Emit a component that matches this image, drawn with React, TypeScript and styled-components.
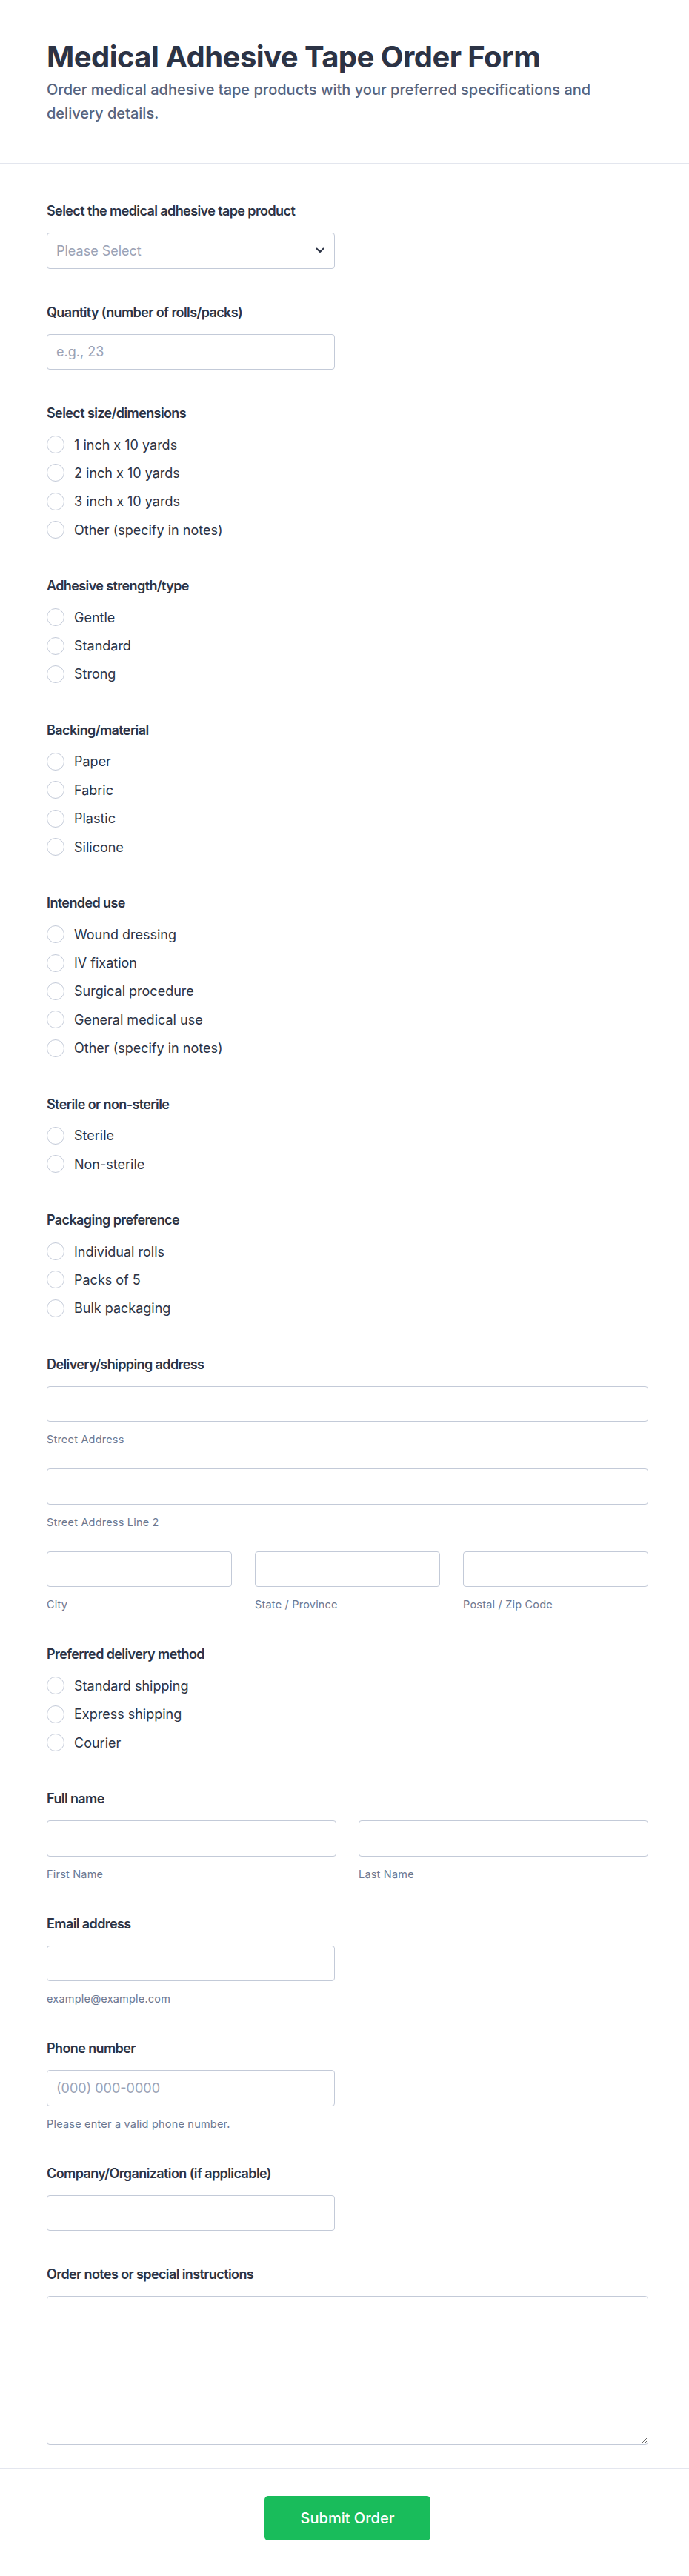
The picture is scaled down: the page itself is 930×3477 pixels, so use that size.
import React from "react";
import styled, { createGlobalStyle } from "styled-components";

const GlobalStyle = createGlobalStyle`
  * {
    box-sizing: border-box;
  }

  body {
    margin: 0;
    background: #ffffff;
    font-family: Inter, "Noto Sans", sans-serif;
    color: #2c3345;
  }
`;

type Option = string;

const sizes: Option[] = [
  "1 inch x 10 yards",
  "2 inch x 10 yards",
  "3 inch x 10 yards",
  "Other (specify in notes)",
];
const strengths: Option[] = ["Gentle", "Standard", "Strong"];
const backings: Option[] = ["Paper", "Fabric", "Plastic", "Silicone"];
const uses: Option[] = [
  "Wound dressing",
  "IV fixation",
  "Surgical procedure",
  "General medical use",
  "Other (specify in notes)",
];
const sterility: Option[] = ["Sterile", "Non-sterile"];
const packaging: Option[] = ["Individual rolls", "Packs of 5", "Bulk packaging"];
const delivery: Option[] = ["Standard shipping", "Express shipping", "Courier"];

function RadioGroup({ name, label, options }: { name: string; label: string; options: Option[] }) {
  return (
    <Field>
      <Label $tight>{label}</Label>
      <RadioList>
        {options.map((opt) => (
          <RadioRow key={opt}>
            <Radio name={name} value={opt} />
            <span>{opt}</span>
          </RadioRow>
        ))}
      </RadioList>
    </Field>
  );
}

function App() {
  return (
    <Page>
      <GlobalStyle />
      <Header>
        <Title>Medical Adhesive Tape Order Form</Title>
        <Subtitle>
          Order medical adhesive tape products with your preferred specifications and delivery
          details.
        </Subtitle>
      </Header>

      <Form onSubmit={(e) => e.preventDefault()}>
        <Field>
          <Label>Select the medical adhesive tape product</Label>
          <SelectWrap>
            <Select defaultValue="">
              <option value="" disabled>
                Please Select
              </option>
              <option>Paper tape</option>
              <option>Silk tape</option>
              <option>Transparent tape</option>
              <option>Foam tape</option>
            </Select>
            <Chevron width="12" height="8" viewBox="0 0 12 8" aria-hidden>
              <path d="M1.5 1.5L6 6l4.5-4.5" />
            </Chevron>
          </SelectWrap>
        </Field>

        <Field>
          <Label>Quantity (number of rolls/packs)</Label>
          <TextInput $half type="number" placeholder="e.g., 23" />
        </Field>

        <RadioGroup name="size" label="Select size/dimensions" options={sizes} />
        <RadioGroup name="strength" label="Adhesive strength/type" options={strengths} />
        <RadioGroup name="backing" label="Backing/material" options={backings} />
        <RadioGroup name="use" label="Intended use" options={uses} />
        <RadioGroup name="sterile" label="Sterile or non-sterile" options={sterility} />
        <RadioGroup name="packaging" label="Packaging preference" options={packaging} />

        <Field>
          <Label>Delivery/shipping address</Label>
          <AddressStack>
            <InputBlock>
              <TextInput />
              <SubLabel>Street Address</SubLabel>
            </InputBlock>
            <InputBlock>
              <TextInput />
              <SubLabel>Street Address Line 2</SubLabel>
            </InputBlock>
            <Columns $count={3}>
              <InputBlock>
                <TextInput />
                <SubLabel>City</SubLabel>
              </InputBlock>
              <InputBlock>
                <TextInput />
                <SubLabel>State / Province</SubLabel>
              </InputBlock>
              <InputBlock>
                <TextInput />
                <SubLabel>Postal / Zip Code</SubLabel>
              </InputBlock>
            </Columns>
          </AddressStack>
        </Field>

        <RadioGroup name="delivery" label="Preferred delivery method" options={delivery} />

        <Field>
          <Label>Full name</Label>
          <Columns $count={2}>
            <InputBlock>
              <TextInput />
              <SubLabel>First Name</SubLabel>
            </InputBlock>
            <InputBlock>
              <TextInput />
              <SubLabel>Last Name</SubLabel>
            </InputBlock>
          </Columns>
        </Field>

        <Field>
          <Label>Email address</Label>
          <TextInput $half type="email" />
          <SubLabel>example@example.com</SubLabel>
        </Field>

        <Field>
          <Label>Phone number</Label>
          <TextInput $half type="tel" placeholder="(000) 000-0000" />
          <SubLabel>Please enter a valid phone number.</SubLabel>
        </Field>

        <Field>
          <Label>Company/Organization (if applicable)</Label>
          <TextInput $half />
        </Field>

        <Field>
          <Label>Order notes or special instructions</Label>
          <TextArea />
        </Field>
      </Form>

      <Footer>
        <SubmitButton type="submit">Submit Order</SubmitButton>
      </Footer>
    </Page>
  );
}

const Page = styled.div`
  width: 100%;
  background: #ffffff;
`;

const Header = styled.header`
  padding: 53px 55px 51px 63px;
  border-bottom: 1px solid #e3e6ee;
`;

const Title = styled.h1`
  margin: 0;
  font-size: 40px;
  line-height: 48px;
  font-weight: 700;
  letter-spacing: -0.55px;
  color: #2c3345;
`;

const Subtitle = styled.p`
  margin: 4px 0 0;
  max-width: 760px;
  font-size: 20px;
  line-height: 32px;
  font-weight: 500;
  color: #57647e;
`;

const Form = styled.form`
  display: flex;
  flex-direction: column;
  gap: 45px;
  padding: 50px 55px 31px 63px;
`;

const Field = styled.div`
  display: flex;
  flex-direction: column;
  align-items: flex-start;
`;

const Label = styled.label<{ $tight?: boolean }>`
  font-size: 18px;
  line-height: 27px;
  font-weight: 600;
  letter-spacing: -0.6px;
  color: #2c3345;
  margin-bottom: ${(p) => (p.$tight ? "12px" : "16px")};
`;

const SubLabel = styled.span`
  margin-top: 16px;
  font-size: 14.5px;
  line-height: 16px;
  letter-spacing: 0.2px;
  color: #6c7891;
`;

const TextInput = styled.input<{ $half?: boolean }>`
  width: ${(p) => (p.$half ? "389px" : "100%")};
  height: 48.5px;
  padding: 0 12px;
  border: 1px solid #c3cad8;
  border-radius: 4px;
  background: #ffffff;
  font-family: inherit;
  font-size: 18px;
  color: #2c3345;
  outline: none;

  &::placeholder {
    color: #9ba3b6;
  }

  &::-webkit-outer-spin-button,
  &::-webkit-inner-spin-button {
    -webkit-appearance: none;
    margin: 0;
  }
`;

const SelectWrap = styled.div`
  position: relative;
  width: 389px;
`;

const Select = styled.select`
  appearance: none;
  width: 100%;
  height: 48.5px;
  padding: 0 40px 0 12px;
  border: 1px solid #c3cad8;
  border-radius: 4px;
  background: #ffffff;
  font-family: inherit;
  font-size: 18px;
  color: #9ba3b6;
  outline: none;
`;

const Chevron = styled.svg`
  position: absolute;
  right: 14px;
  top: 20px;
  fill: none;
  stroke: #2c3345;
  stroke-width: 2;
  stroke-linecap: round;
  stroke-linejoin: round;
  pointer-events: none;
`;

const RadioList = styled.div`
  display: flex;
  flex-direction: column;
  gap: 4.4px;
`;

const RadioRow = styled.label`
  display: flex;
  align-items: center;
  gap: 13px;
  height: 34px;
  font-size: 18px;
  color: #2c3345;
  cursor: pointer;
`;

const Radio = styled.input.attrs({ type: "radio" })`
  appearance: none;
  margin: 0;
  width: 24px;
  height: 24px;
  flex-shrink: 0;
  border: 1.5px solid #c3cad8;
  border-radius: 50%;
  background: #ffffff;
  cursor: pointer;

  &:checked {
    border: 7px solid #2e69ff;
  }
`;

const AddressStack = styled.div`
  display: flex;
  flex-direction: column;
  gap: 31px;
  width: 100%;
`;

const InputBlock = styled.div`
  display: flex;
  flex-direction: column;
  min-width: 0;
`;

const Columns = styled.div<{ $count: number }>`
  display: grid;
  grid-template-columns: repeat(${(p) => p.$count}, 1fr);
  gap: ${(p) => (p.$count === 3 ? "31px" : "30px")};
  width: 100%;
`;

const TextArea = styled.textarea`
  width: 100%;
  height: 201px;
  padding: 12px;
  border: 1px solid #c3cad8;
  border-radius: 4px;
  font-family: inherit;
  font-size: 18px;
  color: #2c3345;
  resize: vertical;
  outline: none;
`;

const Footer = styled.div`
  display: flex;
  justify-content: center;
  padding: 37px 55px 49px 63px;
  border-top: 1px solid #e3e6ee;
`;

const SubmitButton = styled.button`
  height: 59.5px;
  padding: 0 49px;
  border: none;
  border-radius: 5px;
  background: #19bc5b;
  color: #ffffff;
  font-family: inherit;
  font-size: 20px;
  font-weight: 500;
  cursor: pointer;
`;

export default App;
